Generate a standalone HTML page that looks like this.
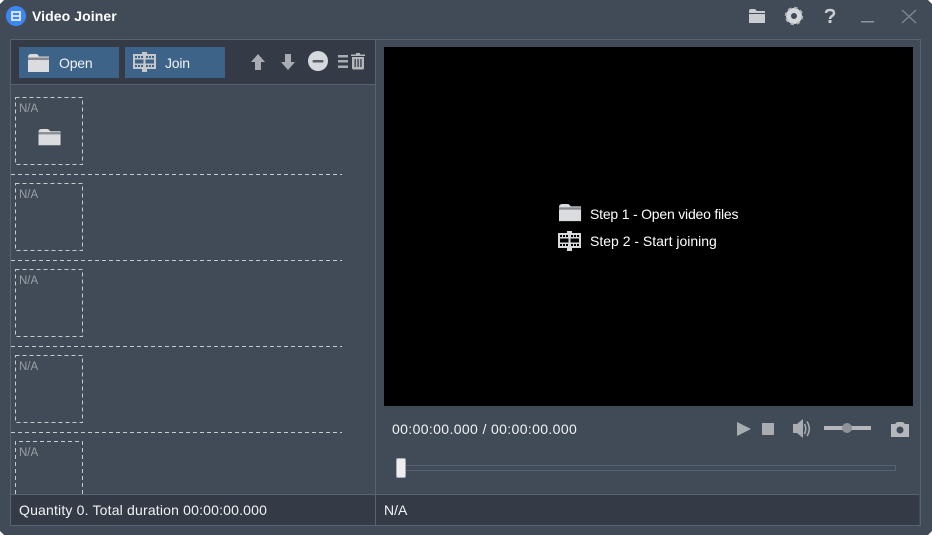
<!DOCTYPE html>
<html><head><meta charset="utf-8"><style>
html,body{margin:0;padding:0;background:#414b58;}
#a{position:relative;width:932px;height:535px;overflow:hidden;background:#414b58;font-family:"Liberation Sans",sans-serif;font-size:14px;color:#f0f2f4;}
#a div{position:absolute;white-space:nowrap;}
svg{position:absolute;left:0;top:0;}
.n{font-size:11.500px;color:#9a9fa5;}
</style></head><body><div id="a">
<div style="left:10px;top:39px;width:909px;height:485px;border:1px solid #566375;"></div>
<div style="left:11px;top:40px;width:364px;height:44px;background:#343a46;border-bottom:1px solid #566375;"></div>
<div style="left:11px;top:494px;width:908px;height:30px;background:#343a46;border-top:1px solid #566375;"></div>
<div style="left:375px;top:40px;width:1px;height:485px;background:#566375;"></div>
<div style="left:19px;top:47px;width:100px;height:31px;background:#3d6389;"></div>
<div style="left:125px;top:47px;width:100px;height:31px;background:#3d6389;"></div>
<div style="left:384px;top:47px;width:529px;height:359px;background:#000;"></div>
<div style="left:397px;top:465px;width:497px;height:4px;border:1px solid #566375;"></div>
<svg width="932" height="535" viewBox="0 0 932 535">
<defs>
<g id="film"><path fill-rule="evenodd" d="M0 2H23V17H0ZM2 4V6H4V4ZM5 4V6H7V4ZM8 4V6H10V4ZM13 4V6H15V4ZM16 4V6H18V4ZM19 4V6H21V4ZM2 13V15H4V13ZM5 13V15H7V13ZM8 13V15H10V13ZM13 13V15H15V13ZM16 13V15H18V13ZM19 13V15H21V13ZM2 7.500V11.500H10.500V7.500ZM12.500 7.500V11.500H21V7.500Z"/><path d="M9 0H14V2H9ZM9 17H14V20H9Z"/></g>
<g id="fold"><path d="M0 3.500Q0 0 3 0H8Q10 0 11 2.500H21V18H0Z"/><rect x="0" y="3.500" width="21" height="2.500" fill="#878b91"/></g>
</defs>
<path d="M0 4L4 0H0ZM928 0L932 4V0ZM0 531L4 535H0ZM932 531L928 535H932Z" fill="#fff"/>
<circle cx="16" cy="16" r="10" fill="#3f87f0"/>
<path fill="#cfe0fb" fill-rule="evenodd" d="M11 11H21V21H11ZM13 13V15H19V13ZM13 17V19H19V17Z"/>
<use href="#fold" x="28" y="54" fill="#dadcdf"/>
<use href="#film" x="133" y="52" fill="#c4c7cb"/>
<path fill="#a9adb2" d="M258 54L265 62H261V70H255V62H251Z"/>
<path fill="#a9adb2" d="M288 70L295 62H291V54H285V62H281Z"/>
<circle cx="318" cy="61" r="10" fill="#d5d9de"/><rect x="312.500" y="60" width="11" height="2.500" rx="1" fill="#555e69"/>
<path fill="#a9adb2" d="M338 55H348V57.500H338ZM338 60H348V62.500H338ZM338 65.500H348V68H338Z"/>
<path fill="#b4b8bd" fill-rule="evenodd" d="M351 54.500H356V53H360V54.500H365V56H351ZM352 57H364V68Q364 69.500 362.500 69.500H353.500Q352 69.500 352 68ZM354.500 59V67H355.800V59ZM357.400 59V67H358.700V59ZM360.300 59V67H361.600V59Z"/>
<use href="#fold" transform="translate(38.500 129) scale(1.050 .9)" fill="#dadcdf"/>
<use href="#fold" transform="translate(559 204) scale(1.050 .95)" fill="#dadcdf"/>
<use href="#film" x="558" y="231" fill="#d8dadd"/>
<g transform="translate(749 9)" fill="#c9ccd0"><path d="M0 2Q0 0 2 0H6L8 2H16V4H0Z"/><rect y="5" width="16" height="9"/></g>
<circle cx="794" cy="16" r="5.500" fill="none" stroke="#d5d8db" stroke-width="5"/>
<circle cx="794" cy="16" r="8.300" fill="none" stroke="#aeb2b6" stroke-width="1.800" stroke-dasharray="3.500 3"/>
<path fill="none" stroke="#c9ccd0" stroke-width="2.400" d="M826 13Q826 10 830 10Q834 10 834 13Q834 15 832 16Q830 17.500 830 19"/><rect x="828.500" y="20" width="3" height="3" fill="#c9ccd0"/>
<rect x="861" y="21" width="13" height="1.500" fill="#8f959b"/>
<path stroke="#7e858c" stroke-width="1.400" fill="none" d="M902 10L916 23M916 10L902 23"/>
<g stroke="#c8cbce" stroke-width="1" stroke-dasharray="4 3" fill="none">
<rect x="15.500" y="97.500" width="67" height="67"/><rect x="15.500" y="183.500" width="67" height="67"/><rect x="15.500" y="269.500" width="67" height="67"/><rect x="15.500" y="355.500" width="67" height="67"/>
<path d="M15.500 494V441.500H82.500V494"/>
<path d="M11 174.500H342M11 260.500H342M11 346.500H342M11 432.500H342"/>
</g>
<path fill="#a9adb2" d="M737 422L751 429L737 436Z"/><rect x="762" y="423" width="12" height="12" fill="#a9adb2"/>
<path fill="#a9adb2" d="M793 424H797L803 419V438L797 433H793Z"/>
<path fill="none" stroke="#a9adb2" stroke-width="1.500" d="M804.500 424Q807 429 804.500 434M807 421.500Q811.500 429 807 436"/>
<rect x="824" y="426" width="47" height="4" fill="#b4b8bd"/><circle cx="847" cy="428" r="5" fill="#8f9397"/>
<path fill="#b4b8bd" fill-rule="evenodd" d="M891 424H895L897 422H903L905 424H909V437H891ZM900 426.500A3.500 3.500 0 1 0 900 433.500A3.500 3.500 0 1 0 900 426.500Z"/>
<rect x="396.500" y="458.500" width="9" height="19" rx="1.500" fill="#eeeeee" stroke="#a9adb2"/>
</svg>
<div style="left:32px;top:8px;font-weight:bold;font-size:14px;color:#fff;letter-spacing:.08px;">Video Joiner</div>
<div style="left:59px;top:55px;letter-spacing:-.2px;">Open</div>
<div style="left:165px;top:55px;letter-spacing:-.2px;">Join</div>
<div class="n" style="left:19px;top:103px;">N/A</div>
<div class="n" style="left:19px;top:189px;">N/A</div>
<div class="n" style="left:19px;top:275px;">N/A</div>
<div class="n" style="left:19px;top:361px;">N/A</div>
<div class="n" style="left:19px;top:447px;">N/A</div>
<div style="left:590px;top:206px;color:#fff;letter-spacing:-.2px;">Step 1 - Open video files</div>
<div style="left:590px;top:233px;color:#fff;">Step 2 - Start joining</div>
<div style="left:392px;top:421px;letter-spacing:.37px;">00:00:00.000 / 00:00:00.000</div>
<div style="left:19px;top:502px;letter-spacing:.18px;">Quantity 0. Total duration 00:00:00.000</div>
<div style="left:384px;top:502px;">N/A</div>
</div></body></html>
